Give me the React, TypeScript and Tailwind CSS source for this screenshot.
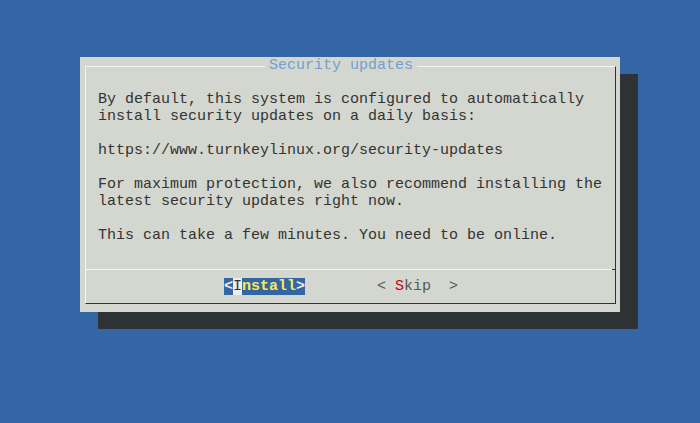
export default function App() {
  const lines = [
    'By default, this system is configured to automatically',
    'install security updates on a daily basis:',
    '',
    'https://www.turnkeylinux.org/security-updates',
    '',
    'For maximum protection, we also recommend installing the',
    'latest security updates right now.',
    '',
    'This can take a few minutes. You need to be online.',
  ];

  return (
    <div
      className="w-[700px] h-[423px] bg-[#3465a4] pt-[57px] pl-[80px] overflow-hidden"
      style={{ fontFamily: '"Liberation Mono", "DejaVu Sans Mono", monospace' }}
    >
      {/* dialog box with dropped shadow */}
      <div className="w-[540px] h-[255px] bg-[#d3d7cf] shadow-[18px_17px_0_#2e3436] pt-[9px] pl-[5px] pr-[4px] pb-[8px] text-[15px] leading-[17px] text-[#333333]">
        <div className="relative h-[238px] border-l border-t border-l-[#f4f4f2] border-t-[#f4f4f2] border-r border-b border-r-[#2e3436] border-b-[#2e3436] flex flex-col">
          <span className="absolute top-[-10px] left-[179px] px-[4px] bg-[#d3d7cf] text-[#729fcf] whitespace-pre">
            Security updates
          </span>

          <div className="mt-[24px] pl-[12px] whitespace-pre">
            {lines.map((l, i) => (
              <div key={i} className="h-[17px]">
                {l}
              </div>
            ))}
          </div>

          <div className="mt-[25px] flex h-px">
            <div className="flex-1 bg-[#f4f4f2]" />
            <div className="w-[3px] bg-[#2e3436]" />
          </div>

          <div className="mt-[8px] pl-[138px] flex gap-[72px] whitespace-pre">
            <div className="bg-[#3465a4] flex">
              <span className="text-[#eeeeec] font-bold">&lt;</span>
              <span className="bg-[#eeeeec] text-[#2e3436]">I</span>
              <span className="text-[#fce94f] font-bold">nstall</span>
              <span className="text-[#eeeeec] font-bold">&gt;</span>
            </div>
            <div className="flex text-[#555753]">
              <span>&lt; </span>
              <span className="text-[#cc0000]">S</span>
              <span>kip  &gt;</span>
            </div>
          </div>
        </div>
      </div>
    </div>
  );
}
